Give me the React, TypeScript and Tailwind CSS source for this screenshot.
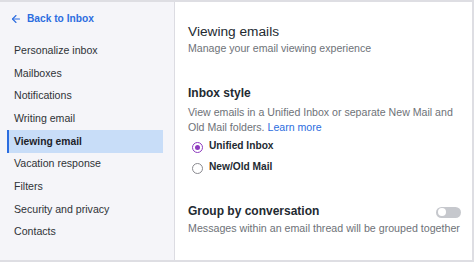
import { ArrowLeft } from 'lucide-react'

const navItems = [
  'Personalize inbox',
  'Mailboxes',
  'Notifications',
  'Writing email',
  'Viewing email',
  'Vacation response',
  'Filters',
  'Security and privacy',
  'Contacts',
]

function Radio({ label, checked }: { label: string; checked?: boolean }) {
  return (
    <div className="flex items-center h-[21px]">
      <span
        className={
          checked
            ? 'w-[11px] h-[11px] mt-[2px] rounded-full border border-[#8e3bbf] flex items-center justify-center bg-white'
            : 'w-[11px] h-[11px] mt-[2px] rounded-full border border-[#8a8a90] bg-white'
        }
      >
        {checked && <span className="w-[5px] h-[5px] rounded-full bg-[#8e3bbf]" />}
      </span>
      <span className="ml-[6px] text-[10.2px] text-[#232a31] font-bold">{label}</span>
    </div>
  )
}

export default function App() {
  return (
    <div
      className="w-[474px] h-[262px] flex border-t-2 border-r-2 border-b-2 border-[#dedee3] bg-white overflow-hidden"
      style={{ fontFamily: '"Liberation Sans", Arial, sans-serif' }}
    >
      <aside className="w-[175px] shrink-0 bg-[#f5f5f9] border-r border-[#dcdce2] pt-[9px]">
        <button className="flex items-center h-[16px] pl-[10px] text-[#2c6de0] text-[10.2px] font-bold">
          <ArrowLeft size={12} strokeWidth={2.2} />
          <span className="ml-[5px]">Back to Inbox</span>
        </button>
        <nav className="mt-[12.5px] ml-[7px] w-[156px]">
          {navItems.map(item => {
            const active = item === 'Viewing email'
            return (
              <div
                key={item}
                className={
                  active
                    ? 'h-[22.7px] flex items-center pl-[5px] border-l-2 border-[#2c6de0] bg-[#c8ddf8] text-[10.3px] font-bold text-[#1d2228]'
                    : 'h-[22.7px] flex items-center pl-[5px] border-l-2 border-transparent text-[10.6px] text-[#2f3337]'
                }
              >
                {item}
              </div>
            )
          })}
        </nav>
      </aside>

      <main className="flex-1 pl-[13px] pr-[11px] pt-[21px] whitespace-nowrap">
        <h1 className="text-[13.7px] leading-[18px] text-[#232a31]">Viewing emails</h1>
        <p className="text-[10.6px] leading-[14px] text-[#6e7278]">Manage your email viewing experience</p>

        <h2 className="mt-[30px] text-[12px] leading-[16px] font-bold text-[#232a31]">Inbox style</h2>
        <p className="mt-[3.5px] text-[10.6px] leading-[15px] text-[#6e7278]">
          View emails in a Unified Inbox or separate New Mail and
          <br />
          Old Mail folders. <span className="text-[#2c6de0]">Learn more</span>
        </p>

        <div className="mt-[1px] pl-[4px]">
          <Radio label="Unified Inbox" checked />
          <Radio label="New/Old Mail" />
        </div>

        <div className="mt-[25.5px] flex items-center justify-between h-[16px]">
          <h2 className="text-[12px] font-bold text-[#232a31]">Group by conversation</h2>
          <span className="w-[25px] h-[11px] mt-[2px] rounded-full bg-[#c6c8cd] flex items-center px-[1.5px]">
            <span className="w-[8px] h-[8px] rounded-full bg-white" />
          </span>
        </div>
        <p className="mt-[2px] text-[10.66px] leading-[14px] text-[#6e7278]">
          Messages within an email thread will be grouped together
        </p>
      </main>
    </div>
  )
}
